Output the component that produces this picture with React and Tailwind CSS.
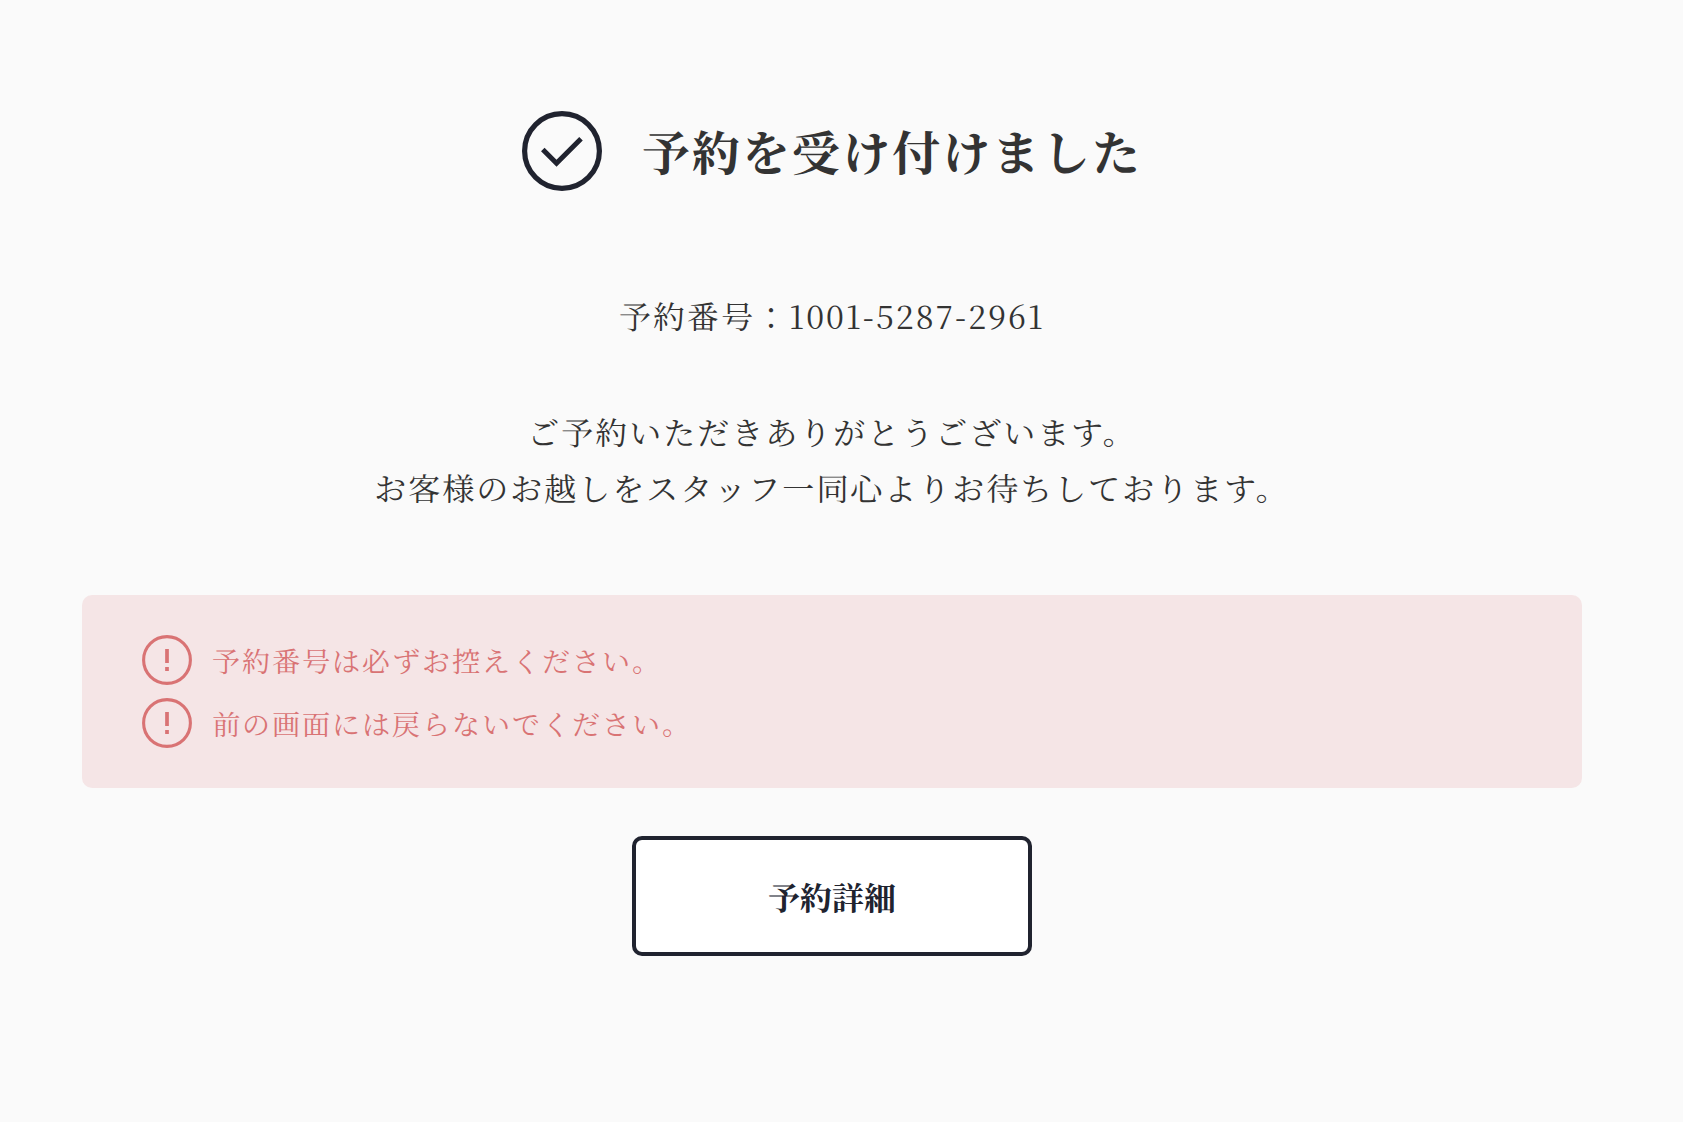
const notes = [
  '予約番号は必ずお控えください。',
  '前の画面には戻らないでください。',
];

const CheckIcon = () => (
  <svg className="h-20 w-20 shrink-0" viewBox="0 0 80 80" fill="none" stroke="currentColor" aria-hidden="true">
    <circle cx="40" cy="40" r="37.4" strokeWidth="5.2" />
    <path d="M20.8 38.5 L34.5 52.2 L59 27.7" strokeWidth="5" />
  </svg>
);

const AlertIcon = () => (
  <svg className="h-[50px] w-[50px] shrink-0" viewBox="0 0 50 50" fill="none" stroke="currentColor" aria-hidden="true">
    <circle cx="25" cy="25" r="23.4" strokeWidth="3.1" />
    <path d="M25 14 V28 M25 32 V36" strokeWidth="3.7" />
  </svg>
);

const Note = ({ children }) => (
  <li className="flex items-center gap-5 text-[28px] leading-[48px] tracking-[2px]">
    <AlertIcon />
    <span>{children}</span>
  </li>
);

export default function App() {
  return (
    <main className="min-h-screen bg-[#fafafa] pt-[111px] pr-[51px] pb-20 pl-8 font-['Noto_Serif_JP','Noto_Serif_CJK_JP','Liberation_Serif','Noto_Sans_CJK_JP',serif] text-[#333333]" lang="ja">
      <div className="mx-auto flex w-full max-w-[1500px] flex-col items-center">
        <div className="flex items-center gap-10">
          <span className="text-[#20232f]">
            <CheckIcon />
          </span>
          <h1 className="text-5xl leading-[80px] font-bold tracking-[2px]">予約を受け付けました</h1>
        </div>

        <p className="mt-24 text-[32px] leading-[56px] tracking-[2px]">予約番号：1001-5287-2961</p>

        <p className="mt-[60px] text-center text-[32px] leading-[56px] tracking-[2px]">
          ご予約いただきありがとうございます。
          <br />
          お客様のお越しをスタッフ一同心よりお待ちしております。
        </p>

        <ul className="mt-20 flex w-full flex-col gap-[13px] rounded-[10px] bg-[#f5e5e6] px-[60px] py-10 text-[#d97374]">
          {notes.map((note) => (
            <Note key={note}>{note}</Note>
          ))}
        </ul>

        <button type="button" className="mt-12 h-[120px] w-[400px] rounded-[10px] border-4 border-[#20232f] bg-white text-[32px] font-bold text-[#20232f]">
          予約詳細
        </button>
      </div>
    </main>
  );
}
